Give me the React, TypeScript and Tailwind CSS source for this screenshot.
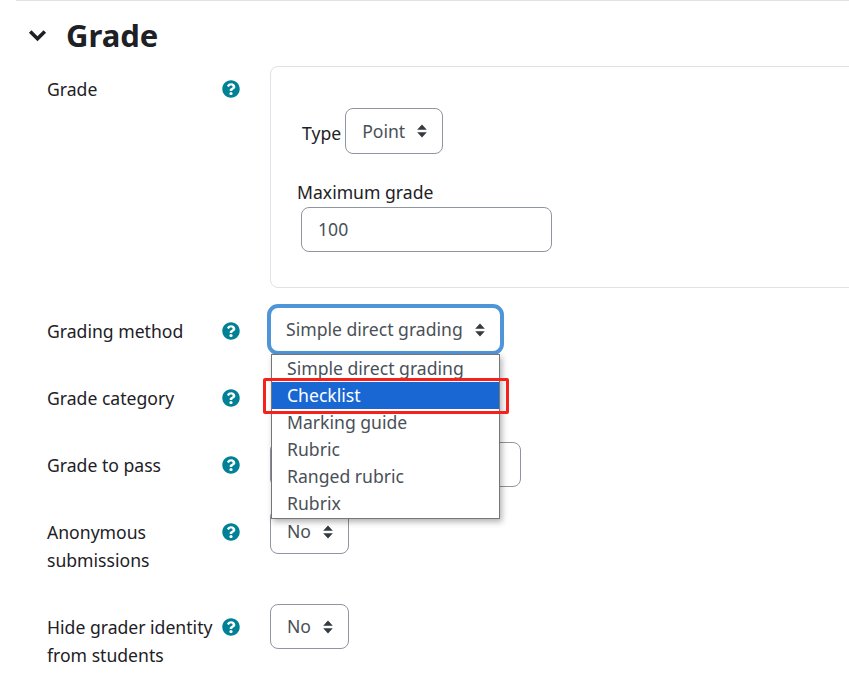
import React from 'react';
import { FaQuestionCircle } from 'react-icons/fa';

const options = ['Simple direct grading', 'Checklist', 'Marking guide', 'Rubric', 'Ranged rubric', 'Rubrix'];

const SortArrows = () => (
  <svg width="10" height="14" viewBox="0 0 10 14" className="shrink-0">
    <path d="M5 0.5 L9.8 5.8 H0.2 Z M5 13.5 L9.8 8.2 H0.2 Z" fill="#343a40" />
  </svg>
);

const Help = () => <FaQuestionCircle className="w-[18px] h-[18px] text-[#008196] shrink-0" />;

const Select = ({ value, className = '' }: { value: string; className?: string }) => (
  <div className={`h-[45px] flex items-center justify-between pl-4 pr-[15px] border border-[#8f959e] rounded-lg bg-white text-[#495057] ${className}`}>
    <span>{value}</span>
    <SortArrows />
  </div>
);

const Row = ({ label, className = '', children }: { label: React.ReactNode; className?: string; children?: React.ReactNode }) => (
  <div className={`flex items-start ${className}`}>
    <div className="w-[270px] shrink-0 pl-[47px] flex pt-[9px] leading-[28px] text-[#1d2125]">
      <div className="w-[175px] shrink-0">{label}</div>
      <div className="pt-[5px]"><Help /></div>
    </div>
    <div>{children}</div>
  </div>
);

export default function App() {
  return (
    <div className="relative w-[849px] h-[688px] overflow-hidden bg-white text-[17.6px] font-['Noto_Sans','Open_Sans',sans-serif]">
      <div className="ml-4 h-px bg-[#dee2e6]" />
      <div className="flex items-center h-[65px] pl-[28px] pt-[4px]">
        <svg width="19" height="13" viewBox="0 0 19 13" className="shrink-0">
          <path d="M2.2 2.5 L9.5 9.8 L16.8 2.5" fill="none" stroke="#1d2125" strokeWidth="3.6" />
        </svg>
        <h2 className="ml-[19px] text-[31px] font-bold text-[#1d2125]">Grade</h2>
      </div>

      <Row label="Grade" className="h-[242px]">
        <div className="w-[600px] h-[222px] border border-[#dee2e6] rounded-lg pt-[41px] pl-[26px]">
          <div className="flex items-center">
            <span className="mt-[5px] mr-[4px] pl-[5px] text-[#1d2125]">Type</span>
            <Select value="Point" className="w-[98px] h-[46px]" />
          </div>
          <div className="mt-[24px] leading-[28px] text-[#1d2125]">Maximum grade</div>
          <div className="mt-[1px] ml-[4px] w-[251px] h-[45px] flex items-center pl-4 border border-[#8f959e] rounded-lg text-[#495057]">100</div>
        </div>
      </Row>

      <Row label="Grading method" className="h-[67px]" />
      <Row label="Grade category" className="h-[67px]" />
      <Row label="Grade to pass" className="h-[67px]">
        <div className="w-[251px] h-[45px] border border-[#8f959e] rounded-lg" />
      </Row>
      <Row label={<>Anonymous<br />submissions</>} className="h-[95px]">
        <Select value="No" className="w-[79px]" />
      </Row>
      <Row label={<>Hide grader identity<br />from students</>}>
        <Select value="No" className="w-[79px]" />
      </Row>

      {/* focused select + native dropdown sit on top of the form */}
      <div className="absolute left-[267px] top-[304px] w-[237px] h-[51px] rounded-[11px] border-[4px] border-[#4f96d8]">
        <div className="h-full flex items-center justify-between pl-[15px] pr-[15px] text-[#495057]">
          <span>Simple direct grading</span>
          <SortArrows />
        </div>
      </div>
      <div className="absolute left-[271px] top-[354px] w-[229px] h-[165px] border border-[#767676] bg-white shadow-[2px_3px_6px_rgba(0,0,0,0.3)] text-[#495057] overflow-hidden">
        {options.map((o, i) => (
          <div key={o} className={`h-[27px] leading-[27px] pl-[15px] ${i === 1 ? 'bg-[#1967d2] text-white' : ''}`}>{o}</div>
        ))}
      </div>
      <div className="absolute left-[263px] top-[378px] w-[246px] h-[36px] border-[3px] border-[#f5221b] rounded-[2px]" />
    </div>
  );
}
